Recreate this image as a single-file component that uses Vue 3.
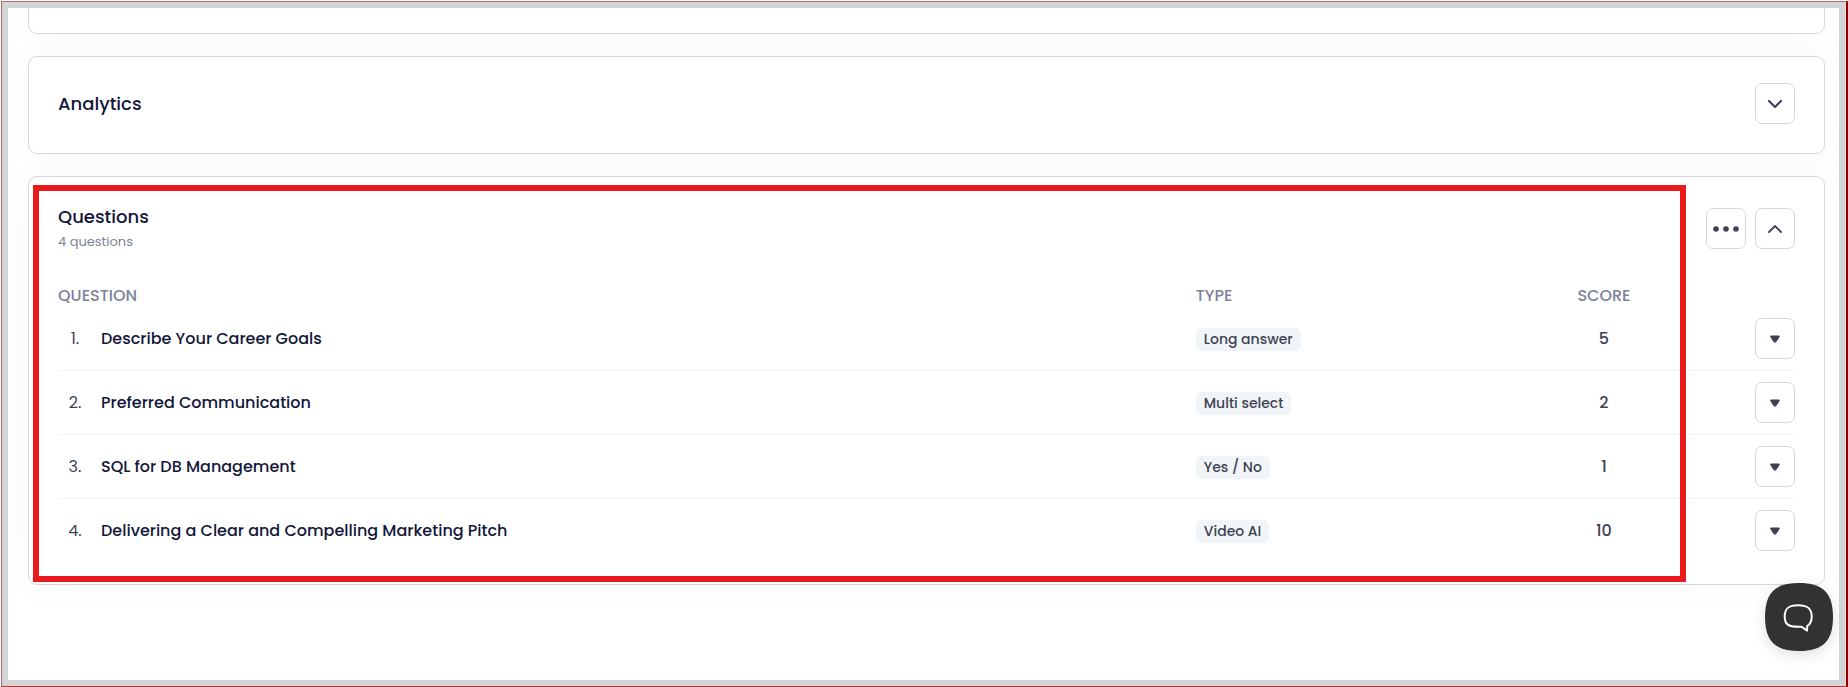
<template>
  <div class="frame">
    <main class="page">
      <section class="card card-previous"></section>

      <section class="card card-collapsed">
        <h2 class="card-title">Analytics</h2>
        <button class="icon-button" type="button" aria-label="Expand analytics">
          <svg width="16" height="10" viewBox="0 0 16 10" fill="none">
            <path d="M2 2l6 6 6-6" stroke="currentColor" stroke-width="2.2" stroke-linecap="round" stroke-linejoin="round" />
          </svg>
        </button>
      </section>

      <section class="card card-questions">
        <header class="card-header">
          <div>
            <h2 class="card-title">Questions</h2>
            <p class="card-subtitle">{{ questions.length }} questions</p>
          </div>
          <div class="card-actions">
            <button class="icon-button" type="button" aria-label="More options">
              <svg width="28" height="6" viewBox="0 0 28 6" fill="currentColor">
                <circle cx="4" cy="3" r="2.8" />
                <circle cx="14" cy="3" r="2.8" />
                <circle cx="24" cy="3" r="2.8" />
              </svg>
            </button>
            <button
              class="icon-button"
              type="button"
              aria-label="Toggle questions"
              @click="isOpen = !isOpen"
            >
              <svg :class="{ flipped: !isOpen }" width="16" height="10" viewBox="0 0 16 10" fill="none">
                <path d="M2 8l6-6 6 6" stroke="currentColor" stroke-width="1.8" stroke-linecap="round" stroke-linejoin="round" />
              </svg>
            </button>
          </div>
        </header>

        <table v-if="isOpen" class="questions-table">
          <thead>
            <tr>
              <th class="col-question">QUESTION</th>
              <th class="col-type">TYPE</th>
              <th class="col-score">SCORE</th>
              <td class="col-actions"></td>
            </tr>
          </thead>
          <tbody>
            <tr v-for="(question, index) in questions" :key="index">
              <td>
                <div class="question">
                  <span class="question-number">{{ index + 1 }}.</span>
                  <span class="question-title">{{ question.title }}</span>
                </div>
              </td>
              <td><span class="badge">{{ question.type }}</span></td>
              <td class="col-score">{{ question.score }}</td>
              <td class="col-actions">
                <button class="icon-button" type="button" :aria-label="`Options for ${question.title}`">
                  <svg width="10" height="8" viewBox="0 0 10 8" fill="currentColor">
                    <path d="M1 .5h8a.8.8 0 0 1 .7 1.3C9 3.200 7.600 5.600 6.200 7a1.600 1.600 0 0 1-2.400 0C2.400 5.600 1 3.200.3 1.800A.8.8 0 0 1 1 .5z" />
                  </svg>
                </button>
              </td>
            </tr>
          </tbody>
        </table>

        <div class="highlight"></div>
      </section>
    </main>

    <button class="chat-button" type="button" aria-label="Open chat">
      <svg width="68" height="68" viewBox="0 0 68 68" fill="none">
        <path d="M34 0C58 0 68 10 68 34S58 68 34 68 0 58 0 34 10 0 34 0z" fill="#323232" />
        <path
          d="M33 22.200C42.500 22.200 46.700 25.500 46.700 33.500c0 4.500-1.500 7.800-4.500 9.600l-.2 4.500-5.400-3.900c-1 .1-2 .1-3.600.1C23.500 43.700 19.700 41.500 19.700 33.500S23.500 22.200 33 22.200z"
          stroke="#fff"
          stroke-width="2"
          stroke-linejoin="round"
        />
      </svg>
    </button>
  </div>
</template>

<script setup>
import { ref } from 'vue';

const isOpen = ref(true);

const questions = ref([
  { title: 'Describe Your Career Goals', type: 'Long answer', score: 5 },
  { title: 'Preferred Communication', type: 'Multi select', score: 2 },
  { title: 'SQL for DB Management', type: 'Yes / No', score: 1 },
  { title: 'Delivering a Clear and Compelling Marketing Pitch', type: 'Video AI', score: 10 }
]);
</script>

<style>
body {
  margin: 0;
  background: #fff;
}

#app {
  display: flex;
  box-sizing: border-box;
  min-height: 100vh;
  padding: 1px 0 0 1px;
}
</style>

<style scoped>
.frame {
  position: relative;
  flex: 1;
  box-sizing: border-box;
  border: 1px solid #b5656c;
  border-right: 2px solid #8b0000;
  border-bottom-color: #b03a3a;
  padding: 6px 7px 6px 6px;
  background: #d3d4d5;
  box-shadow: inset -1px 0 0 #ecd9da;
  display: flex;
  font-family: Poppins, Inter, sans-serif;
  color: #12163a;
}

.page {
  flex: 1;
  display: flex;
  flex-direction: column;
  gap: 22px;
  padding: 0 14px 0 20px;
  background: #fff;
  overflow: hidden;
}

.card {
  box-sizing: border-box;
  padding: 0 29px;
  border: 1px solid #d5d8e2;
  border-radius: 9px;
  background: #fff;
  box-shadow: 0 0 40px rgba(60, 60, 60, 0.03);
}

.card-previous {
  height: 26px;
  border-top: none;
  border-radius: 0 0 9px 9px;
}

.card-collapsed {
  display: flex;
  align-items: center;
  justify-content: space-between;
  padding-top: 26px;
  padding-bottom: 29px;
}

.card-questions {
  position: relative;
  padding-top: 28px;
  padding-bottom: 22px;
}

.card-header {
  display: flex;
  justify-content: space-between;
  align-items: flex-start;
}

.card-title {
  margin: 0;
  font-size: 18px;
  font-weight: 500;
  line-height: 24px;
}

.card-subtitle {
  margin: 0;
  font-size: 13px;
  line-height: 26px;
  color: #7e8299;
}

.card-actions {
  display: flex;
  gap: 9px;
  margin-top: 3px;
}

.icon-button {
  box-sizing: border-box;
  display: inline-flex;
  align-items: center;
  justify-content: center;
  width: 40px;
  height: 41px;
  padding: 0;
  border: 1px solid #d5d8e2;
  border-radius: 7px;
  background: #fff;
  color: #3f4254;
  cursor: pointer;
}

.flipped {
  transform: rotate(180deg);
}

.questions-table {
  width: 100%;
  margin-top: 30px;
  border-collapse: collapse;
  table-layout: fixed;
  font-size: 16px;
}

.questions-table th,
.questions-table td {
  padding: 0;
  text-align: left;
}

.questions-table th {
  height: 22px;
  line-height: 22px;
  font-weight: 500;
  color: #7e8299;
}

.questions-table tbody td {
  height: 63px;
  border-bottom: 1px solid #f1f3f6;
  font-weight: 500;
  color: #3f4254;
}

.questions-table tbody tr:last-child td {
  border-bottom: none;
}

.col-type {
  width: 17.5%;
}

.questions-table .col-score {
  width: 12%;
  text-align: center;
}

.questions-table .col-actions {
  width: 5%;
  text-align: right;
}

.col-actions .icon-button {
  vertical-align: middle;
}

.question {
  display: flex;
  gap: 9px;
}

.question-number {
  width: 34px;
  text-align: center;
  font-weight: 400;
}

.question-title {
  color: #12163a;
}

.badge {
  display: inline-block;
  padding: 0 8px;
  border-radius: 5px;
  background: #f1f5f8;
  font-size: 14px;
  line-height: 23px;
  vertical-align: middle;
}

.highlight {
  position: absolute;
  top: 8px;
  right: 138px;
  bottom: 2px;
  left: 4px;
  border: 6px solid #e71b1b;
  pointer-events: none;
}

.chat-button {
  position: absolute;
  right: 13px;
  bottom: 35px;
  width: 68px;
  height: 68px;
  padding: 0;
  border: none;
  border-radius: 28px;
  background: transparent;
  box-shadow: 0 4px 14px rgba(0, 0, 0, 0.12);
  cursor: pointer;
}

.chat-button svg {
  display: block;
}
</style>
